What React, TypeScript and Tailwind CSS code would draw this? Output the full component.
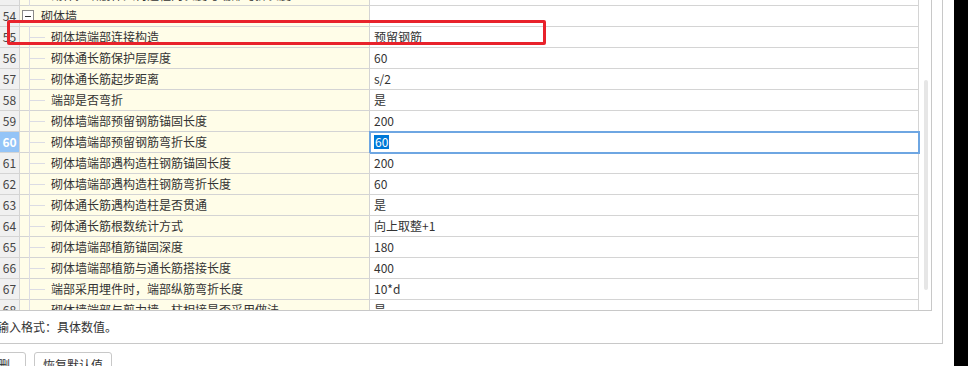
const rows: { n: number; name: string; value: string; kind?: 'group' }[] = [
  { n: 53, name: '砌体拉结筋伸入构造柱内长度与端部弯折长度', value: '10*d' },
  { n: 54, name: '砌体墙', value: '', kind: 'group' },
  { n: 55, name: '砌体墙端部连接构造', value: '预留钢筋' },
  { n: 56, name: '砌体通长筋保护层厚度', value: '60' },
  { n: 57, name: '砌体通长筋起步距离', value: 's/2' },
  { n: 58, name: '端部是否弯折', value: '是' },
  { n: 59, name: '砌体墙端部预留钢筋锚固长度', value: '200' },
  { n: 60, name: '砌体墙端部预留钢筋弯折长度', value: '60' },
  { n: 61, name: '砌体墙端部遇构造柱钢筋锚固长度', value: '200' },
  { n: 62, name: '砌体墙端部遇构造柱钢筋弯折长度', value: '60' },
  { n: 63, name: '砌体通长筋遇构造柱是否贯通', value: '是' },
  { n: 64, name: '砌体通长筋根数统计方式', value: '向上取整+1' },
  { n: 65, name: '砌体墙端部植筋锚固深度', value: '180' },
  { n: 66, name: '砌体墙端部植筋与通长筋搭接长度', value: '400' },
  { n: 67, name: '端部采用埋件时，端部纵筋弯折长度', value: '10*d' },
  { n: 68, name: '砌体墙端部与剪力墙、柱相接是否采用做法', value: '是' },
];

const SELECTED = 60;

function Row({ n, name, value, kind }: (typeof rows)[number]) {
  const selected = n === SELECTED;
  return (
    <div className="flex h-[21px] shrink-0 border-b border-[#d4d4d4]">
      {/* row number */}
      <div
        className={
          selected
            ? 'w-[20px] shrink-0 border-r border-[#d4d4d4] bg-[#94c4f7] text-white font-bold flex items-center justify-center'
            : 'w-[20px] shrink-0 border-r border-[#d4d4d4] bg-[#f0f0f0] text-[#444] flex items-center justify-center'
        }
      >
        {n}
      </div>

      {/* name with tree guides */}
      <div className="relative w-[350px] shrink-0 border-r border-[#d4d4d4] bg-[#fffde8] flex items-center">
        {kind === 'group' ? (
          <>
            <span className="ml-[2px] w-[12px] h-[12px] border border-[#8a8a8a] bg-white flex items-center justify-center">
              <span className="w-[6px] h-px bg-[#333]" />
            </span>
            <span className="ml-[7px] text-[#333]">{name}</span>
          </>
        ) : (
          <>
            <span className="absolute left-[9px] -top-px -bottom-px w-px bg-[#dcdce4]" />
            <span className="absolute left-[9px] top-[10px] w-[16px] h-px bg-[#dcdce4]" />
            <span className="ml-[31px] text-[#333] whitespace-nowrap">{name}</span>
          </>
        )}
      </div>

      {/* value */}
      {selected ? (
        <div className="relative w-[549px] shrink-0 bg-white flex items-center">
          <div className="absolute -left-px -top-px -right-px -bottom-[2px] border-2 border-[#6ea6e2]" />
          <span className="ml-[4px] px-px bg-[#0078d7] text-white leading-[14px]">{value}</span>
        </div>
      ) : (
        <div className="w-[549px] shrink-0 border-r border-[#d4d4d4] bg-white flex items-center">
          <span className="ml-[4px] text-[#333]">{value}</span>
        </div>
      )}
    </div>
  );
}

export default function App() {
  return (
    <div
      className="w-[968px] h-[366px] overflow-hidden bg-white flex text-[12px]"
      style={{ fontFamily: '"Noto Sans CJK SC", "Microsoft YaHei", sans-serif' }}
    >
      <div className="relative w-[954px] shrink-0 flex flex-col">
        {/* outer panel */}
        <div className="w-[943px] h-[344px] shrink-0 border-r border-b border-[#c8c8c8] flex flex-col">
          {/* property grid */}
          <div className="w-[932px] h-[311px] shrink-0 border-r border-b border-[#c8c8c8] flex overflow-hidden">
            <div className="w-[919px] shrink-0 flex flex-col -mt-[15px]">
              {rows.map((r) => (
                <Row key={r.n} {...r} />
              ))}
            </div>
            {/* scrollbar */}
            <div className="flex-1 pt-[80px] pl-[5px]">
              <div className="w-[4px] h-[210px] rounded-full bg-[#e6e6e6]" />
            </div>
          </div>
          <div className="flex-1 flex items-center -ml-[3px] text-[#333]">输入格式：具体数值。</div>
        </div>

        {/* buttons */}
        <div className="flex gap-[8px] mt-[8px]">
          <button className="-ml-[4px] w-[30px] h-[26px] border border-[#c8c8c8] rounded-[3px] bg-white text-[#333] text-left pl-px">
            删
          </button>
          <button className="w-[78px] h-[26px] border border-[#c8c8c8] rounded-[3px] bg-white text-[#333]">
            恢复默认值
          </button>
        </div>

        {/* annotation box */}
        <div className="absolute left-[7px] top-[20px] w-[539px] h-[25px] border-[3px] border-[#e8222b] rounded-[2px]" />
      </div>
      <div className="flex-1 bg-black" />
    </div>
  );
}
